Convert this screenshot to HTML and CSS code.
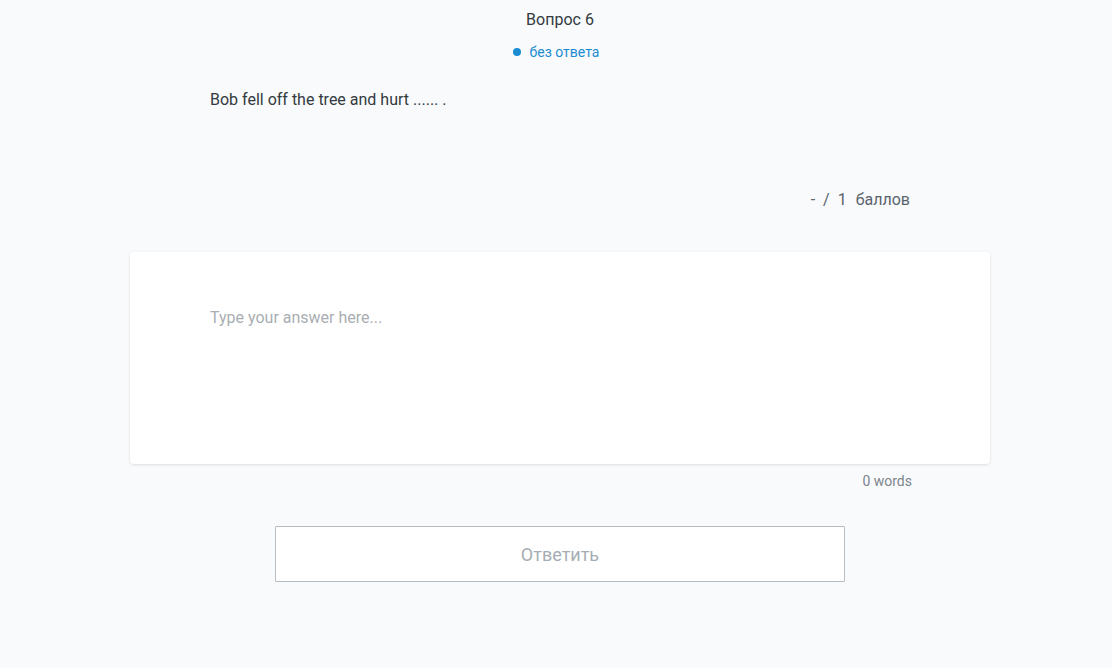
FILE: index.html
```html
<!DOCTYPE html>
<html lang="ru">
<head>
<meta charset="utf-8">
<link rel="stylesheet" href="styles.css">
</head>
<body>
<main class="page">
  <header class="head">
    <div class="title">Вопрос 6</div>
    <div class="status"><span class="dot"></span>без ответа</div>
  </header>
  <section class="body">
    <p class="question">Bob fell off the tree and hurt ...... .</p>
    <div class="points"><span>-</span><span>/</span><span>1</span><span class="unit">баллов</span></div>
  </section>
  <div class="card">
    <div class="placeholder">Type your answer here...</div>
  </div>
  <div class="words">0 words</div>
  <div class="actions">
    <button class="submit">Ответить</button>
  </div>
</main>
</body>
</html>
```

FILE: styles.css
```css
html, body {
  margin: 0;
  padding: 0;
  background: #f8fafc;
  font-family: Roboto, "Noto Sans", Arial, sans-serif;
}
.page {
  width: 860px;
  margin-left: 130px;
  display: flex;
  flex-direction: column;
}
.head {
  display: flex;
  flex-direction: column;
  align-items: center;
  padding-top: 10px;
}
.title {
  font-size: 16px;
  line-height: 20px;
  color: #333a40;
}
.status {
  margin-top: 14px;
  margin-right: 8px;
  display: flex;
  align-items: center;
  gap: 9px;
  font-size: 14px;
  line-height: 16px;
  color: #1b8bd2;
}
.dot {
  width: 8px;
  height: 8px;
  border-radius: 50%;
  background: #1b8bd2;
}
.body {
  padding: 0 80px;
  display: flex;
  flex-direction: column;
}
.question {
  margin: 30px 0 0;
  font-size: 16px;
  line-height: 20px;
  color: #333a40;
}
.points {
  margin-top: 80px;
  align-self: flex-end;
  display: flex;
  gap: 8px;
  font-size: 16px;
  line-height: 20px;
  color: #5b636b;
}
.points .unit {
  margin-left: 1px;
}
.card {
  margin-top: 42px;
  height: 212px;
  background: #fff;
  border-radius: 4px;
  box-shadow: 0 1px 3px rgba(0, 0, 0, 0.12);
  padding: 56px 80px 0;
  box-sizing: border-box;
}
.placeholder {
  font-size: 16px;
  line-height: 20px;
  color: #a9aeb3;
}
.words {
  align-self: flex-end;
  margin-right: 78px;
  margin-top: 9px;
  font-size: 14px;
  line-height: 16px;
  color: #7d858c;
}
.actions {
  display: flex;
  justify-content: center;
  margin-top: 37px;
}
.submit {
  width: 570px;
  height: 56px;
  background: #fff;
  border: 1px solid #b4bcc4;
  border-radius: 1px;
  font-family: inherit;
  font-size: 18px;
  color: #a5adb4;
}
```
